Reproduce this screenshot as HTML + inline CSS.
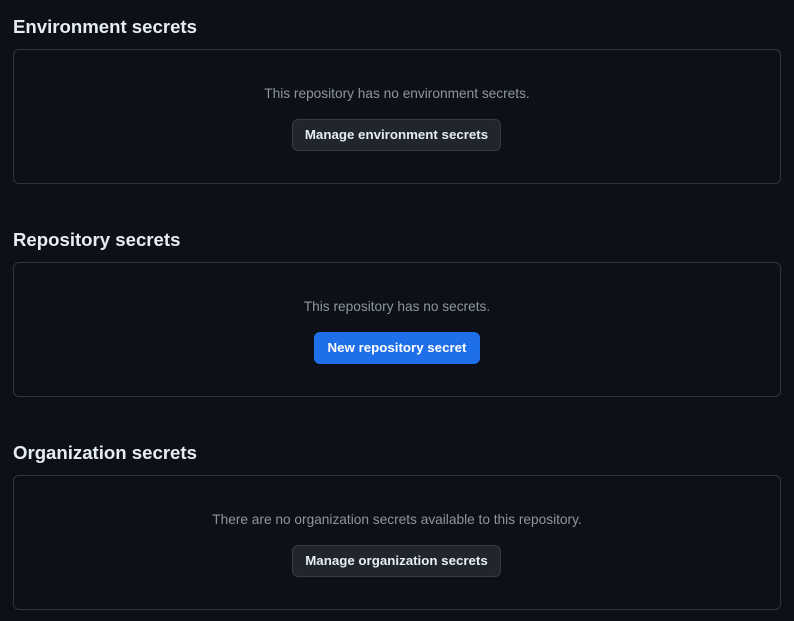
<!DOCTYPE html><html><head><style>
body{margin:0;background:#0d1117;font-family:"Liberation Sans",sans-serif;width:794px;height:621px;overflow:hidden;position:relative}
h2{position:absolute;left:13px;margin:0;font-size:18.6px;font-weight:600;color:#e6edf3;line-height:24px}
.box{position:absolute;left:13px;width:768px;border:1px solid #30363d;border-radius:6px;box-sizing:border-box}
.t{position:absolute;left:0;right:0;text-align:center;font-size:13.7px;color:#8d96a0;top:36px}
.b{position:absolute;top:69px;height:32px;box-sizing:border-box;border:1px solid #363b42;background:#21262d;color:#e6edf3;border-radius:6px;font-size:13.3px;font-weight:bold;line-height:30px;text-align:center}
.p{background:#1f6feb;border-color:#1f6feb;color:#fff}
</style></head><body>
<h2 style="top:15px">Environment secrets</h2>
<div class="box" style="top:49px;height:135px"><div class="t">This repository has no environment secrets.</div><div class="b" style="left:278px;width:209px">Manage environment secrets</div></div>
<h2 style="top:228px">Repository secrets</h2>
<div class="box" style="top:262px;height:135px"><div class="t">This repository has no secrets.</div><div class="b p" style="left:300px;width:166px">New repository secret</div></div>
<h2 style="top:441px">Organization secrets</h2>
<div class="box" style="top:475px;height:135px"><div class="t">There are no organization secrets available to this repository.</div><div class="b" style="left:278px;width:209px">Manage organization secrets</div></div>
</body></html>
